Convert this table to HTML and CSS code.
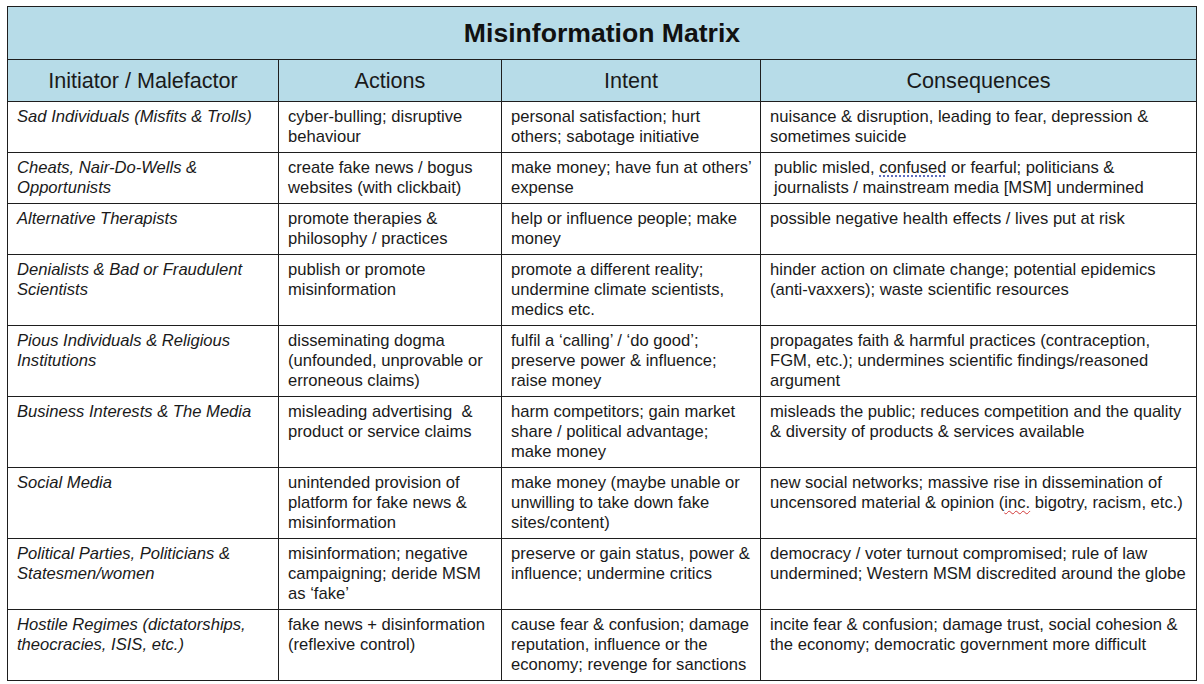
FILE: index.html
```html
<!DOCTYPE html>
<html lang="en">
<head>
<meta charset="utf-8">
<title>Misinformation Matrix</title>
<link rel="stylesheet" href="styles.css">
</head>
<body>
<table class="matrix">
  <colgroup>
    <col class="c1">
    <col class="c2">
    <col class="c3">
    <col class="c4">
  </colgroup>
  <thead>
    <tr class="title-row"><th colspan="4">Misinformation Matrix</th></tr>
    <tr class="head-row">
      <th>Initiator / Malefactor</th>
      <th>Actions</th>
      <th>Intent</th>
      <th>Consequences</th>
    </tr>
  </thead>
  <tbody>
    <tr>
      <td class="who">Sad Individuals (Misfits &amp; Trolls)</td>
      <td>cyber-bulling; disruptive<br>behaviour</td>
      <td>personal satisfaction; hurt<br>others; sabotage initiative</td>
      <td>nuisance &amp; disruption, leading to fear, depression &amp;<br>sometimes suicide</td>
    </tr>
    <tr class="soft">
      <td class="who">Cheats, Nair-Do-Wells &amp;<br>Opportunists</td>
      <td>create fake news / bogus<br>websites (with clickbait)</td>
      <td>make money; have fun at others’<br>expense</td>
      <td class="indent">public misled, <span class="grammar">confused</span> or fearful; politicians &amp;<br>journalists / mainstream media [MSM] undermined</td>
    </tr>
    <tr>
      <td class="who">Alternative Therapists</td>
      <td>promote therapies &amp;<br>philosophy / practices</td>
      <td>help or influence people; make<br>money</td>
      <td>possible negative health effects / lives put at risk</td>
    </tr>
    <tr>
      <td class="who">Denialists &amp; Bad or Fraudulent<br>Scientists</td>
      <td>publish or promote<br>misinformation</td>
      <td>promote a different reality;<br>undermine climate scientists,<br>medics etc.</td>
      <td>hinder action on climate change; potential epidemics<br>(anti-vaxxers); waste scientific resources</td>
    </tr>
    <tr>
      <td class="who">Pious Individuals &amp; Religious<br>Institutions</td>
      <td>disseminating dogma<br>(unfounded, unprovable or<br>erroneous claims)</td>
      <td>fulfil a ‘calling’ / ‘do good’;<br>preserve power &amp; influence;<br>raise money</td>
      <td>propagates faith &amp; harmful practices (contraception,<br>FGM, etc.); undermines scientific findings/reasoned<br>argument</td>
    </tr>
    <tr>
      <td class="who">Business Interests &amp; The Media</td>
      <td>misleading advertising &nbsp;&amp;<br>product or service claims</td>
      <td>harm competitors; gain market<br>share / political advantage;<br>make money</td>
      <td>misleads the public; reduces competition and the quality<br>&amp; diversity of products &amp; services available</td>
    </tr>
    <tr>
      <td class="who">Social Media</td>
      <td>unintended provision of<br>platform for fake news &amp;<br>misinformation</td>
      <td>make money (maybe unable or<br>unwilling to take down fake<br>sites/content)</td>
      <td>new social networks; massive rise in dissemination of<br>uncensored material &amp; opinion (<span class="spell">inc.</span> bigotry, racism, etc.)</td>
    </tr>
    <tr class="soft">
      <td class="who">Political Parties, Politicians &amp;<br>Statesmen/women</td>
      <td>misinformation; negative<br>campaigning; deride MSM<br>as ‘fake’</td>
      <td>preserve or gain status, power &amp;<br>influence; undermine critics</td>
      <td>democracy / voter turnout compromised; rule of law<br>undermined; Western MSM discredited around the globe</td>
    </tr>
    <tr>
      <td class="who">Hostile Regimes (dictatorships,<br>theocracies, ISIS, etc.)</td>
      <td>fake news + disinformation<br>(reflexive control)</td>
      <td>cause fear &amp; confusion; damage<br>reputation, influence or the<br>economy; revenge for sanctions</td>
      <td>incite fear &amp; confusion; damage trust, social cohesion &amp;<br>the economy; democratic government more difficult</td>
    </tr>
  </tbody>
</table>
</body>
</html>
```

FILE: styles.css
```css
html, body {
  margin: 0;
  padding: 0;
  background: #ffffff;
}

body {
  padding: 6px 0 0 7px;
  font-family: "Liberation Sans", Arial, sans-serif;
  color: #1a1a1a;
}

.matrix {
  border-collapse: collapse;
  table-layout: fixed;
  width: 1190px;
  border: 1px solid #1e1e1e;
}

.c1 { width: 271px; }
.c2 { width: 223px; }
.c3 { width: 259px; }
.c4 { width: 436px; }

.matrix th,
.matrix td {
  border: 1px solid #1e1e1e;
}

.title-row th {
  background: #b7dce8;
  height: 52px;
  padding: 0;
  font-size: 26.6px;
  font-weight: bold;
  color: #111111;
  text-align: center;
  vertical-align: middle;
}

.head-row th {
  background: #b7dce8;
  height: 41px;
  padding: 0 4px;
  font-size: 21.6px;
  font-weight: normal;
  color: #1a1a1a;
  text-align: center;
  vertical-align: middle;
}

.matrix td {
  padding: 5px 4px 5px 9px;
  font-size: 16.6px;
  line-height: 20px;
  vertical-align: top;
  text-align: left;
  white-space: nowrap;
}

.matrix td.who {
  font-style: italic;
}

.matrix td.indent {
  padding-left: 13px;
}

.matrix tr.soft td {
  border-top-color: #4a4a4a;
}

.grammar {
  text-decoration: underline dotted #3b4fb5;
  text-underline-offset: 3px;
}

.spell {
  text-decoration: underline wavy #d23a3a;
  text-decoration-thickness: 1px;
  text-underline-offset: 2px;
}
```
